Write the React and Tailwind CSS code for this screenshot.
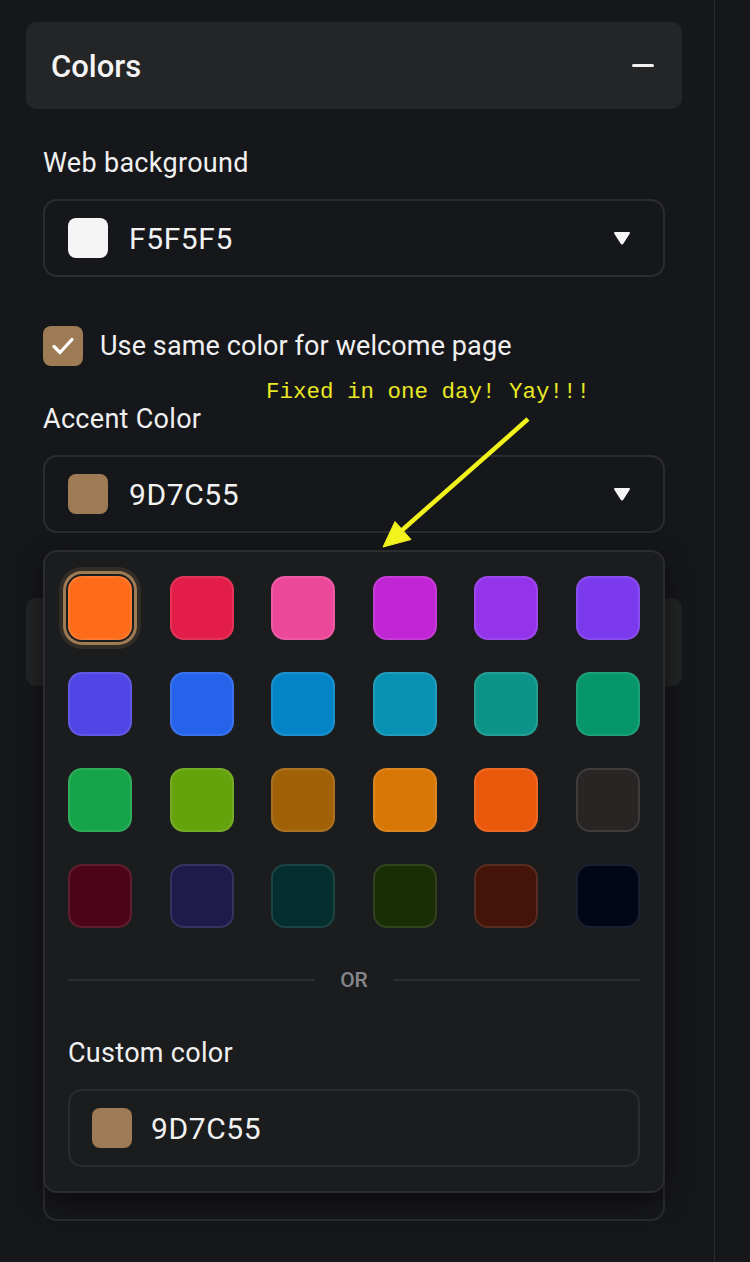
import React from 'react';

const swatches = [
  'bg-[#fe6b1b]', 'bg-[#e11d48]', 'bg-[#ec4899]', 'bg-[#c026d3]', 'bg-[#9333ea]', 'bg-[#7c3aed]',
  'bg-[#4f46e5]', 'bg-[#2563eb]', 'bg-[#0284c7]', 'bg-[#0891b2]', 'bg-[#0d9488]', 'bg-[#059669]',
  'bg-[#16a34a]', 'bg-[#65a30d]', 'bg-[#a16207]', 'bg-[#d97706]', 'bg-[#ea580c]', 'bg-[#292524]',
  'bg-[#4c0519]', 'bg-[#1e1b4b]', 'bg-[#042f2e]', 'bg-[#1a2e05]', 'bg-[#431407]', 'bg-[#020617]',
];

const Caret = () => (
  <svg width="18" height="14" viewBox="0 0 18 14">
    <path d="M2 2 L16 2 L9.6 12 Q9 13 8.4 12 Z" fill="#f5f5f5" stroke="#f5f5f5" strokeWidth="2" strokeLinejoin="round" />
  </svg>
);

const ColorSelect = ({ swatch, value }) => (
  <div className="mt-[20px] h-[78px] rounded-[14px] border-2 border-[#2b2c2f] flex items-center pl-[23px] pr-[32px]">
    <div className={`w-[40px] h-[40px] rounded-[8px] ${swatch}`} />
    <span className="ml-[21px] text-[30px] tracking-[0.6px] text-[#f2f2f2] flex-1">{value}</span>
    <Caret />
  </div>
);

export default function App() {
  return (
    <div className="min-h-screen bg-[#16171a] flex" style={{ fontFamily: 'Roboto, "Noto Sans", sans-serif' }}>
      <div className="relative w-[715px] border-r border-[#2b2c2f] pt-[22px] pl-[26px] pr-[32px] pb-[40px]">
        {/* section header */}
        <div className="h-[87px] rounded-[10px] bg-[#242526] flex items-center justify-between pl-[25px] pr-[28px]">
          <h2 className="text-[31px] leading-[36px] mt-[3px] font-medium text-[#f4f4f4]">Colors</h2>
          <div className="w-[22px] h-[2.5px] bg-[#f2f2f2] rounded-full" />
        </div>

        <div className="px-[17px]">
          <p className="mt-[38px] text-[27px] leading-[32px] tracking-[0.3px] text-[#f0f0f0]">Web background</p>
          <ColorSelect swatch="bg-[#f5f5f5]" value="F5F5F5" />

          <div className="mt-[49px] h-[40px] flex items-center gap-[17px]">
            <div className="w-[40px] h-[40px] rounded-[8px] bg-[#9d7c55] flex items-center justify-center">
              <svg width="40" height="40" viewBox="0 0 40 40">
                <path d="M11 20.5 L17 26.5 L29 13.5" fill="none" stroke="#fff" strokeWidth="3.2" strokeLinecap="round" strokeLinejoin="round" />
              </svg>
            </div>
            <span className="text-[27px] tracking-[0.1px] text-[#f0f0f0]">Use same color for welcome page</span>
          </div>

          <p className="mt-[37px] text-[27px] leading-[32px] tracking-[0.3px] text-[#f0f0f0]">Accent Color</p>
          <ColorSelect swatch="bg-[#9d7c55]" value="9D7C55" />
        </div>

        {/* next section, mostly covered */}
        <div className="mt-[65px] h-[88px] rounded-[10px] bg-[#232425]" />
        <div className="mx-[17px] mt-[457px] h-[78px] rounded-[14px] border-2 border-[#2b2c2f]" />

        {/* colour popover */}
        <div className="absolute left-[43px] top-[550px] w-[622px] rounded-[14px] border-2 border-[#2b2c2f] bg-[#1b1c1e] shadow-[0_8px_24px_rgba(0,0,0,0.5)] pt-[24px] px-[23px] pb-[24px]">
          <div className="grid grid-cols-[repeat(6,64px)] justify-between gap-y-[32px]">
            {swatches.map((c, i) => (
              <div
                key={i}
                className={`w-[64px] h-[64px] rounded-[14px] border-2 border-white/10 ${c} ${i === 0 ? 'shadow-[0_0_0_2px_#1b1c1e,0_0_0_5px_#9d7c55,0_0_0_9px_rgba(157,124,85,0.18)]' : ''}`}
              />
            ))}
          </div>

          <div className="mt-[40px] flex items-center gap-[25px]">
            <div className="flex-1 h-[2px] bg-[#2d2e31]" />
            <span className="text-[21px] leading-[24px] font-medium text-[#85868a]">OR</span>
            <div className="flex-1 h-[2px] bg-[#2d2e31]" />
          </div>

          <p className="mt-[45px] text-[27px] leading-[32px] tracking-[0.3px] text-[#f0f0f0]">Custom color</p>
          <div className="mt-[20px] h-[78px] rounded-[14px] border-2 border-[#2b2c2f] flex items-center pl-[22px]">
            <div className="w-[40px] h-[40px] rounded-[8px] bg-[#9d7c55]" />
            <span className="ml-[19px] text-[30px] tracking-[0.6px] text-[#f2f2f2]">9D7C55</span>
          </div>
        </div>

        {/* annotation */}
        <span
          className="absolute left-[266px] top-[379px] text-[22.5px] leading-[26px] text-[#e8e824]"
          style={{ fontFamily: '"Liberation Mono", "DejaVu Sans Mono", monospace' }}
        >
          Fixed in one day! Yay!!!
        </span>
        <svg className="absolute left-0 top-0 pointer-events-none" width="715" height="600" viewBox="0 0 715 600">
          <line x1="528" y1="419" x2="400" y2="532" stroke="#f2f21c" strokeWidth="4.5" />
          <polygon points="383,547 395,521.5 411,539.5" fill="#f2f21c" stroke="#f2f21c" strokeWidth="1" strokeLinejoin="round" />
        </svg>
      </div>
    </div>
  );
}
